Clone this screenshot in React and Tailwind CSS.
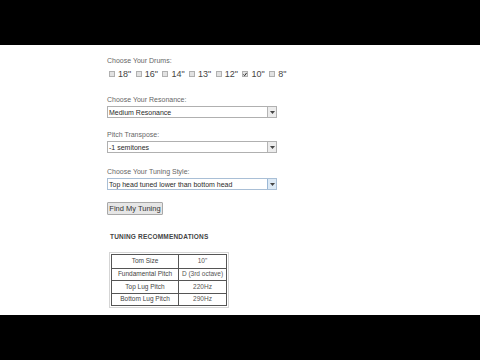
export default function App() {
  const drums = ['18"', '16"', '14"', '13"', '12"', '10"', '8"'];
  const font = { fontFamily: '"Liberation Sans", Arial, sans-serif' };
  const Arrow = ({ blue }) => (
    <div className={`w-[9px] h-full border-l ${blue ? 'border-[#9bb8d6] bg-[#dce9f5]' : 'border-[#b5b5b5] bg-[#ececec]'} flex items-center justify-center`}>
      <svg width="5" height="3" viewBox="0 0 5 3"><path d="M0 0h5L2.5 3z" fill="#444" /></svg>
    </div>
  );
  const Select = ({ text, blue }) => (
    <div className={`w-[170px] h-[12px] border ${blue ? 'border-[#a9bfd6]' : 'border-[#b0b0b0]'} bg-white flex items-center justify-between`}>
      <span className="text-[7px] leading-none text-[#2a2a2a] pl-[1px]">{text}</span>
      <Arrow blue={blue} />
    </div>
  );
  const Label = ({ children }) => (
    <div className="text-[7px] leading-[8px] text-[#666]">{children}</div>
  );
  const rows = [
    ['Tom Size', '10"'],
    ['Fundamental Pitch', 'D (3rd octave)'],
    ['Top Lug Pitch', '220Hz'],
    ['Bottom Lug Pitch', '290Hz'],
  ];
  return (
    <div className="w-[480px] h-[360px] bg-black flex flex-col" style={font}>
      <div className="h-[45px]" />
      <div className="h-[270px] bg-white pl-[107px] pt-[12px] flex flex-col">
        <Label>Choose Your Drums:</Label>
        <div className="flex items-center mt-[4px] h-[10px]">
          {drums.map((d) => (
            <div key={d} className="flex items-center w-[26.7px]">
              <div className="w-[6px] h-[6px] border border-[#b0b0b0] bg-[#e2e2e2] flex items-center justify-center ml-[2px]">
                {d === '10"' && (
                  <svg width="5" height="5" viewBox="0 0 5 5"><path d="M0.5 2.5L2 4L4.5 0.5" stroke="#222" strokeWidth="1.2" fill="none" /></svg>
                )}
              </div>
              <span className="text-[9px] leading-none text-[#444] ml-[3px]">{d}</span>
            </div>
          ))}
        </div>
        <div className="mt-[17px]"><Label>Choose Your Resonance:</Label></div>
        <div className="mt-[2px]"><Select text="Medium Resonance" /></div>
        <div className="mt-[13px]"><Label>Pitch Transpose:</Label></div>
        <div className="mt-[2px]"><Select text="-1 semitones" /></div>
        <div className="mt-[15px]"><Label>Choose Your Tuning Style:</Label></div>
        <div className="mt-[2px]"><Select text="Top head tuned lower than bottom head" blue /></div>
        <div className="mt-[12px]">
          <div className="w-[56px] h-[13px] border border-[#a8a8a8] bg-[#e6e6e6] flex items-center justify-center text-[7.5px] leading-none text-[#333] rounded-[1px]">
            Find My Tuning
          </div>
        </div>
        <div className="mt-[18px] pl-[3px] text-[6.5px] leading-[8px] font-bold text-[#444] tracking-[0.2px]">
          TUNING RECOMMENDATIONS
        </div>
        <div className="mt-[11px] ml-[2px] w-[120px] border border-[#d5d5d5] p-[1px]">
          <div className="border border-[#555]">
            {rows.map(([a, b], i) => (
              <div key={a} className={`flex h-[12.5px] ${i > 0 ? 'border-t border-[#555]' : ''}`}>
                <div className="w-[67px] border-r border-[#555] flex items-center justify-center text-[6.5px] leading-none text-[#444]">{a}</div>
                <div className="flex-1 flex items-center justify-center text-[6.5px] leading-none text-[#555]">{b}</div>
              </div>
            ))}
          </div>
        </div>
      </div>
      <div className="h-[45px]" />
    </div>
  );
}
